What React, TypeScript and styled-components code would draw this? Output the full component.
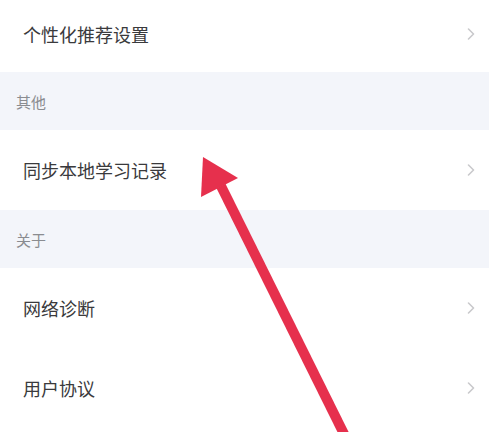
import React from 'react';
import styled, { createGlobalStyle } from 'styled-components';

const GlobalStyle = createGlobalStyle`
  html, body {
    margin: 0;
    padding: 0;
    background: #ffffff;
    font-family: "Noto Sans CJK SC", "Noto Sans", sans-serif;
    overflow: hidden;
  }
`;

interface IRow {
  label: string;
  top?: boolean;
}

interface ISection {
  title?: string;
  rows: IRow[];
}

const sections: ISection[] = [
  { rows: [{ label: '个性化推荐设置', top: true }] },
  { title: '其他', rows: [{ label: '同步本地学习记录' }] },
  { title: '关于', rows: [{ label: '网络诊断' }, { label: '用户协议' }] },
];

const Chevron = () => (
  <svg width="8" height="12" viewBox="0 0 8 12">
    <path
      d="M1.5 1 L6.5 6 L1.5 11"
      fill="none"
      stroke="#c9c9cc"
      strokeWidth="1.6"
      strokeLinecap="round"
      strokeLinejoin="round"
    />
  </svg>
);

// 빨간 화살표 (스크린샷 위에 그려진 표시)
const Arrow = () => (
  <SArrow width="489" height="432" viewBox="0 0 489 432">
    <line
      x1="221"
      y1="186"
      x2="347"
      y2="440"
      stroke="#e6304d"
      strokeWidth="10"
    />
    <polygon points="203,157 201,197 238,178" fill="#e6304d" />
  </SArrow>
);

const App = () => {
  return (
    <SPage>
      <GlobalStyle />
      {sections.map((section, i) => (
        <section key={i}>
          {section.title && <SHeader>{section.title}</SHeader>}
          {section.rows.map((row) => (
            <SRow key={row.label} top={row.top}>
              <span className="label">{row.label}</span>
              <Chevron />
            </SRow>
          ))}
        </section>
      ))}
      <Arrow />
    </SPage>
  );
};

const SPage = styled.div`
  position: relative;
  width: 489px;
  height: 432px;
  overflow: hidden;
  background: #ffffff;
`;

const SHeader = styled.div`
  height: 58px;
  display: flex;
  align-items: center;
  padding: 0 16px;
  background: #f3f5fa;
  color: #8a8c90;
  font-size: 15px;
`;

const SRow = styled.div<{ top?: boolean }>`
  height: ${(p) => (p.top ? '72px' : '80px')};
  padding: ${(p) => (p.top ? '0 14px 4px 23px' : '0 14px 0 23px')};
  box-sizing: border-box;
  display: flex;
  align-items: center;
  justify-content: space-between;
  background: #ffffff;
  .label {
    color: #3a3a3c;
    font-size: 18px;
  }
`;

const SArrow = styled.svg`
  position: absolute;
  left: 0;
  top: 0;
  pointer-events: none;
`;

export default App;
